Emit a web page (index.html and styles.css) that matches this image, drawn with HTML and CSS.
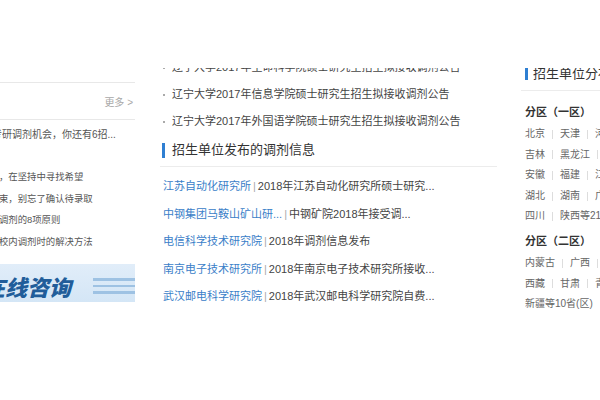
FILE: index.html
```html
<!DOCTYPE html>
<html lang="zh-CN">
<head>
<meta charset="utf-8">
<title>调剂信息</title>
<link rel="stylesheet" href="styles.css">
</head>
<body>
<div class="topbar"></div>
<div class="page">
  <aside class="left">
    <div class="box-head">
      <span class="box-title">调剂经验</span>
      <a class="more">更多 &gt;</a>
    </div>
    <ul class="left-list">
      <li class="lead">不要放弃考研调剂机会，你还有6招...</li>
      <li>调剂不顺利，在坚持中寻找希望</li>
      <li>调剂已经结束，别忘了确认待录取</li>
      <li>考生要了解调剂的8项原则</li>
      <li>考生在遇到校内调剂时的解决方法</li>
    </ul>
    <div class="consult">
      <span class="consult-text">在线咨询</span>
      <span class="consult-lines"><i></i><i></i><i></i></span>
    </div>
  </aside>

  <main class="center">
    <ul class="news">
      <li>辽宁大学2017年生命科学院硕士研究生招生拟接收调剂公告</li>
      <li>辽宁大学2017年信息学院硕士研究生招生拟接收调剂公告</li>
      <li>辽宁大学2017年外国语学院硕士研究生招生拟接收调剂公告</li>
    </ul>
    <h3 class="sec-title">招生单位发布的调剂信息</h3>
    <ul class="units">
      <li><a class="unit">江苏自动化研究所</a><span class="bar">|</span>2018年江苏自动化研究所硕士研究...</li>
      <li><a class="unit">中钢集团马鞍山矿山研...</a><span class="bar">|</span>中钢矿院2018年接受调...</li>
      <li><a class="unit">电信科学技术研究院</a><span class="bar">|</span>2018年调剂信息发布</li>
      <li><a class="unit">南京电子技术研究所</a><span class="bar">|</span>2018年南京电子技术研究所接收...</li>
      <li><a class="unit">武汉邮电科学研究院</a><span class="bar">|</span>2018年武汉邮电科学研究院自费...</li>
    </ul>
  </main>

  <aside class="right">
    <h3 class="sec-title sec-title-right">招生单位分布</h3>
    <div class="zone">
      <div class="zone-title">分区（一区）</div>
      <div class="row">北京<i class="sep"></i>天津<i class="sep"></i>河北<i class="sep"></i>山西</div>
      <div class="row">吉林<i class="sep"></i>黑龙江<i class="sep"></i>上海<i class="sep"></i>江苏</div>
      <div class="row">安徽<i class="sep"></i>福建<i class="sep"></i>江西<i class="sep"></i>山东</div>
      <div class="row">湖北<i class="sep"></i>湖南<i class="sep"></i>广东<i class="sep"></i>重庆</div>
      <div class="row">四川<i class="sep"></i>陕西等21省(市)</div>
      <div class="zone-title zone-title-2">分区（二区）</div>
      <div class="row">内蒙古<i class="sep"></i>广西<i class="sep"></i>贵州<i class="sep"></i>云南</div>
      <div class="row">西藏<i class="sep"></i>甘肃<i class="sep"></i>青海<i class="sep"></i>宁夏</div>
      <div class="row">新疆等10省(区)</div>
    </div>
  </aside>
</div>
</body>
</html>
```
FILE: styles.css
```css
html, body {
  margin: 0;
  padding: 0;
}
body {
  width: 600px;
  height: 400px;
  overflow: hidden;
  background: #fff;
  color: #333;
  font-family: "Liberation Sans", "Noto Sans CJK SC", sans-serif;
}
ul {
  list-style: none;
  margin: 0;
  padding: 0;
}
a {
  text-decoration: none;
}

.topbar {
  position: fixed;
  top: 0;
  left: 0;
  right: 0;
  height: 68px;
  background: #fff;
  z-index: 10;
}

.page {
  display: flex;
  margin-left: -48px;
  white-space: nowrap;
}

/* left column */
.left {
  flex: none;
  width: 183px;
  padding-top: 82px;
}
.box-head {
  height: 36px;
  border-top: 1px solid #e8e8e8;
  border-bottom: 1px solid #e8e8e8;
  display: flex;
  align-items: center;
  justify-content: space-between;
}
.box-title {
  font-size: 11px;
  color: #333;
}
.more {
  font-size: 10px;
  color: #a8a8a8;
  padding-right: 2px;
}
.left-list {
  padding-top: 4px;
  font-size: 9.4px;
  line-height: 21.6px;
  color: #555;
}
.left-list .lead {
  height: 42px;
  font-size: 10px;
}
.consult {
  margin-top: 12px;
  height: 38px;
  box-sizing: border-box;
  padding: 5px 0 0 31px;
  display: flex;
  align-items: center;
  background: linear-gradient(#e1edf9, #d4e6f6);
}
.consult-text {
  font-family: "Noto Sans CJK SC", sans-serif;
  font-size: 22px;
  font-weight: 900;
  font-style: italic;
  color: #215d9a;
  line-height: 28px;
}
.consult-lines {
  margin-left: auto;
  width: 42px;
  display: flex;
  flex-direction: column;
  gap: 4px;
}
.consult-lines i {
  display: block;
  height: 2.5px;
  background: #9ec2e3;
}

/* center column */
.center {
  flex: none;
  width: 337px;
  margin-left: 25px;
  padding-top: 54px;
}
.news li {
  display: flex;
  align-items: center;
  padding-left: 3px;
  font-size: 11px;
  line-height: 27px;
  color: #444;
}
.news li::before {
  content: "";
  width: 2px;
  height: 2px;
  background: #aaa;
  margin-right: 7px;
}
.sec-title {
  margin: 0;
  display: flex;
  align-items: center;
  font-size: 13px;
  font-weight: normal;
  line-height: 20px;
  color: #333;
  padding: 5px 0 6px 0;
  border-bottom: 1px solid #ececec;
}
.sec-title::before {
  content: "";
  width: 3px;
  height: 15px;
  margin: 0 7px 0 2px;
  background: #2f7fd2;
}
.units {
  padding: 6px 0 0 3px;
}
.units li {
  font-size: 11px;
  line-height: 27.5px;
  color: #444;
}
.unit {
  color: #3a80c8;
}
.bar {
  color: #aaa;
  margin: 0 2px;
}

/* right column */
.right {
  flex: none;
  width: 200px;
  margin-left: 24px;
  padding-top: 59px;
  overflow: hidden;
}
.sec-title-right::before {
  height: 12px;
  margin: 0 5px 0 4px;
}
.zone {
  padding-left: 4px;
}
.zone-title {
  font-size: 11px;
  font-weight: bold;
  line-height: 20px;
  color: #333;
  margin: 11px 0 2px;
}
.zone-title-2 {
  margin-top: 4px;
}
.row {
  font-size: 10px;
  line-height: 20.6px;
  color: #666;
}
.sep {
  display: inline-block;
  width: 1px;
  height: 9px;
  background: #ddd;
  margin: 0 7px;
  vertical-align: middle;
}
```
